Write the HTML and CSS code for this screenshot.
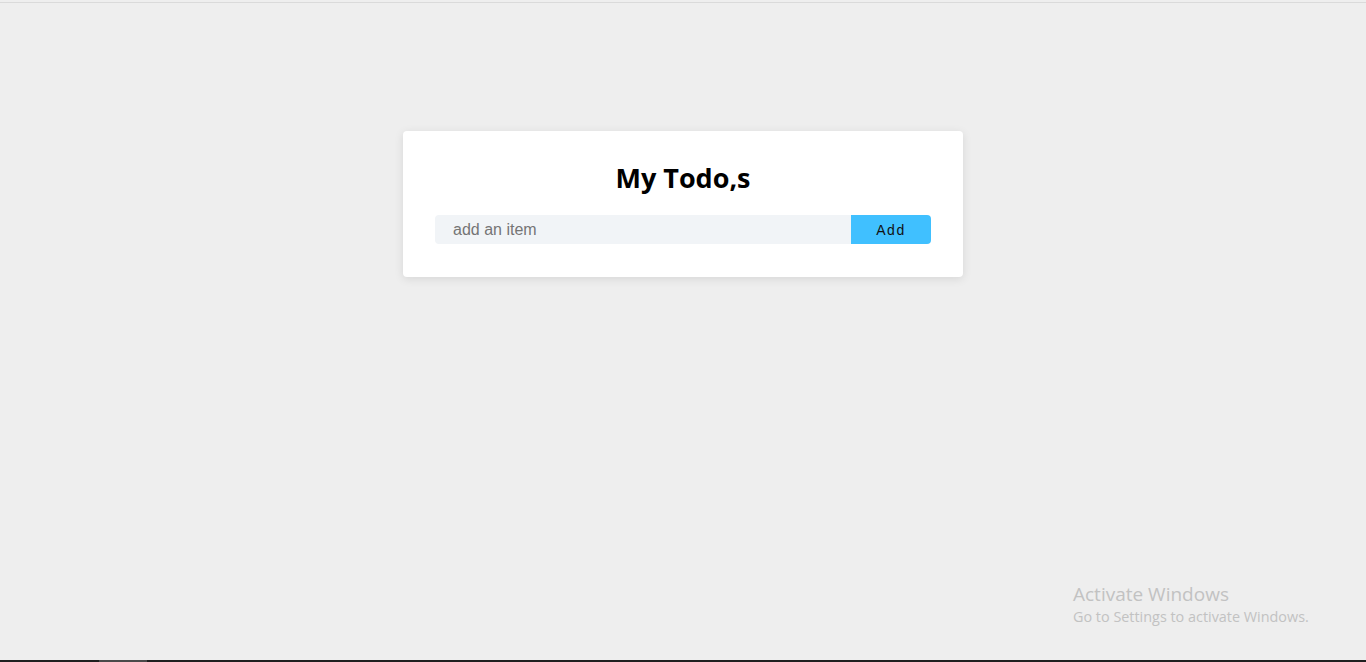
FILE: index.html
```html
<!DOCTYPE html>
<html>
<head>
<meta charset="utf-8">
<link rel="stylesheet" href="styles.css">
</head>
<body>
<div class="page">
  <div class="topline"></div>
  <main class="main">
    <section class="card">
      <h1 class="title">My Todo,s</h1>
      <form class="form">
        <input class="input" type="text" placeholder="add an item">
        <button class="btn" type="button">Add</button>
      </form>
    </section>
  </main>
  <div class="watermark">
    <div class="wm-title">Activate Windows</div>
    <div class="wm-sub">Go to Settings to activate Windows.</div>
  </div>
  <div class="taskbar"><span class="task-item"></span></div>
</div>
</body>
</html>
```
FILE: styles.css
```css
html, body {
  margin: 0;
  padding: 0;
  height: 100%;
}
body {
  background: #eeeeee;
  font-family: "Liberation Sans", Arial, sans-serif;
  overflow: hidden;
}
.page {
  height: 662px;
  display: flex;
  flex-direction: column;
  position: relative;
}
.topline {
  height: 2px;
  border-bottom: 1px solid #dadada;
  flex: none;
}
.main {
  flex: 1;
  display: flex;
  justify-content: center;
  align-items: flex-start;
  padding-top: 128px;
}
.card {
  width: 560px;
  box-sizing: border-box;
  background: #ffffff;
  border-radius: 4px;
  box-shadow: 0 2px 10px rgba(0, 0, 0, 0.1);
  padding: 29px 32px 33px;
}
.title {
  margin: 0 0 19px;
  text-align: center;
  font-family: "Open Sans", "Noto Sans", sans-serif;
  font-weight: 700;
  font-size: 27px;
  line-height: 36px;
  color: #000000;
}
.form {
  display: flex;
  height: 29px;
  margin: 0;
}
.input {
  flex: 1;
  border: none;
  outline: none;
  background: #f1f4f7;
  border-radius: 4px 0 0 4px;
  padding: 0 18px;
  font-family: "Liberation Sans", Arial, sans-serif;
  font-size: 16px;
  color: #333;
}
.input::placeholder {
  color: #757575;
}
.btn {
  width: 80px;
  border: none;
  background: #40c0ff;
  border-radius: 0 4px 4px 0;
  font-family: "Liberation Sans", Arial, sans-serif;
  font-size: 14px;
  letter-spacing: 1.5px;
  color: #111;
  padding: 0;
}
.watermark {
  position: absolute;
  left: 1073px;
  top: 582px;
  color: #c2c2c2;
  font-family: "Open Sans", "Noto Sans", sans-serif;
}
.wm-title {
  font-size: 19px;
  line-height: 24px;
}
.wm-sub {
  font-size: 14.4px;
  line-height: 22px;
}
.taskbar {
  height: 2px;
  background: #1f1f1f;
  flex: none;
  display: flex;
}
.task-item {
  margin-left: 99px;
  width: 48px;
  background: #4a4a4a;
}
```
